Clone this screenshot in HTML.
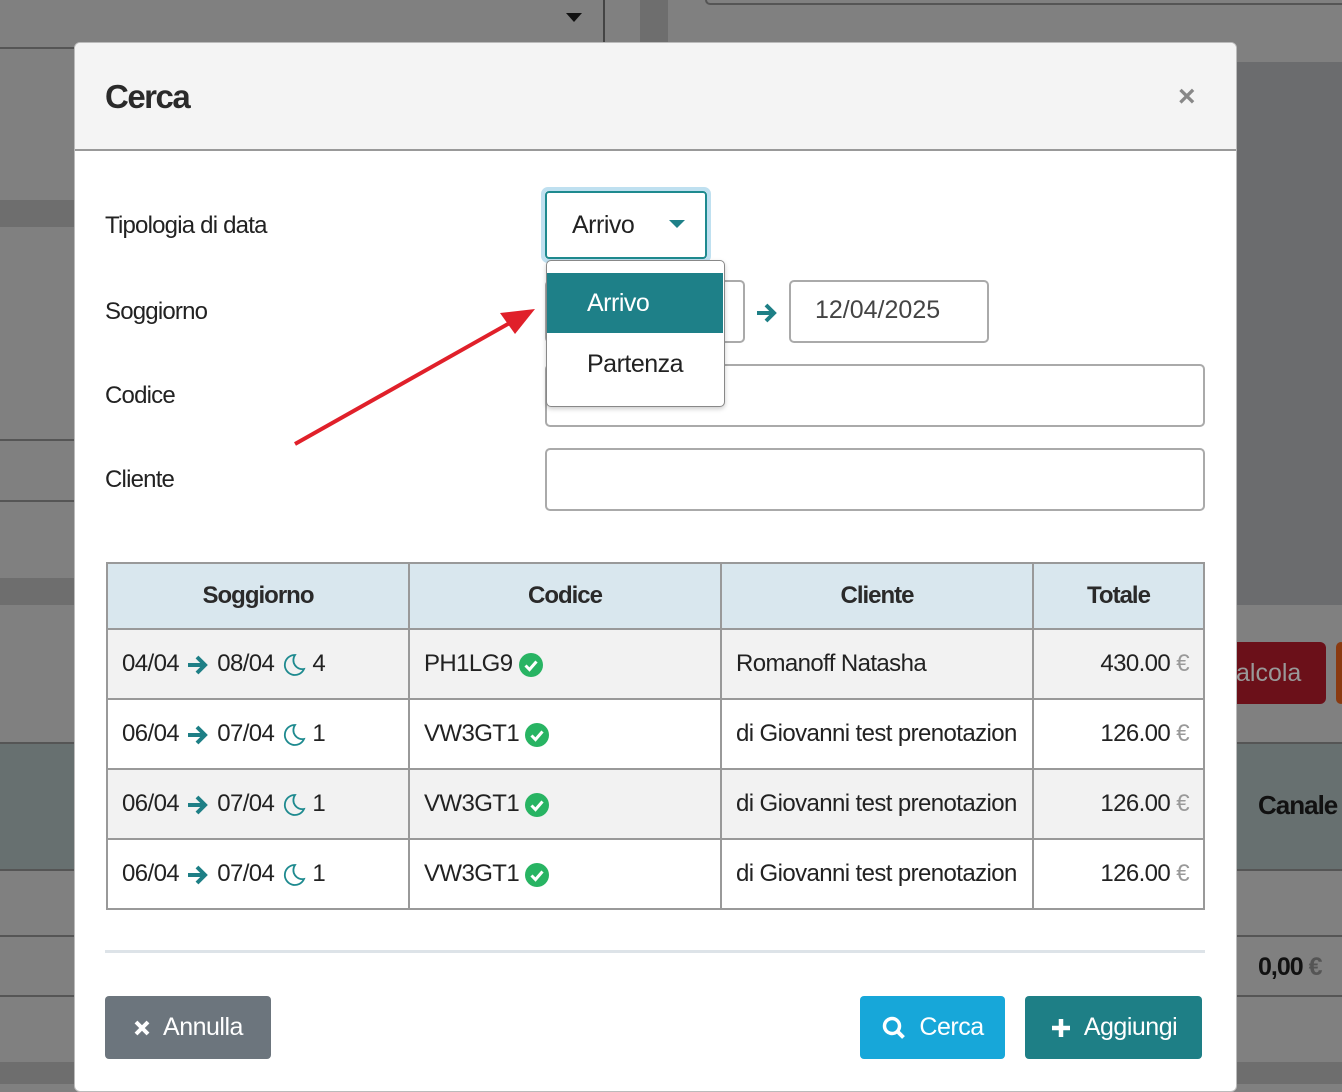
<!DOCTYPE html>
<html><head><meta charset="utf-8"><style>
*{box-sizing:border-box;margin:0;padding:0}
body{width:1342px;height:1084px;overflow:hidden;background:#808080;font-family:"Liberation Sans",sans-serif;position:relative;color:#222}
.a{position:absolute}
.lbl{font-size:24px;letter-spacing:-0.8px;color:#222}
.inp{position:absolute;background:#fff;border:2px solid #aaa;border-radius:5px}
table{border-collapse:collapse;position:absolute;left:106px;top:562px;width:1099px;font-size:24px;letter-spacing:-0.6px}
td,th{border:2px solid #999;height:70px;padding:0 14px;white-space:nowrap;overflow:hidden}
th{background:#d9e7ee;height:66px;font-weight:bold;font-size:24px;letter-spacing:-1px;color:#2a2a2a}
tr.o td{background:#f2f2f2}
td{background:#fff;color:#222}
.eu{color:#999}
.btn{position:absolute;height:63px;border-radius:4px;color:#fff;font-size:25px;letter-spacing:-0.5px;display:flex;align-items:center;justify-content:center;gap:12px}
svg{vertical-align:middle}
</style></head><body>
<!-- background -->
<div class="a" style="left:0;top:47px;width:80px;height:2px;background:#555"></div>
<div class="a" style="left:0;top:200px;width:80px;height:27px;background:#6e6e6e"></div>
<div class="a" style="left:0;top:439px;width:80px;height:2px;background:#555"></div>
<div class="a" style="left:0;top:500px;width:80px;height:2px;background:#555"></div>
<div class="a" style="left:0;top:578px;width:80px;height:27px;background:#6e6e6e"></div>
<div class="a" style="left:0;top:743px;width:1342px;height:127px;background:#677070"></div>
<div class="a" style="left:0;top:742px;width:1342px;height:2px;background:#555"></div>
<div class="a" style="left:0;top:869px;width:1342px;height:2px;background:#555"></div>
<div class="a" style="left:0;top:935px;width:1342px;height:2px;background:#555"></div>
<div class="a" style="left:0;top:995px;width:1342px;height:2px;background:#555"></div>
<div class="a" style="left:0;top:1062px;width:1342px;height:22px;background:#6e6e6e"></div>
<div class="a" style="left:603px;top:0;width:2px;height:44px;background:#444"></div>
<div class="a" style="left:640px;top:0;width:28px;height:44px;background:#6e6e6e"></div>
<div class="a" style="left:705px;top:0;width:640px;height:5px;border-left:2px solid #555;border-bottom:2px solid #555;border-radius:0 0 0 5px"></div>
<div class="a" style="left:566px;top:13px;width:0;height:0;border-left:8px solid transparent;border-right:8px solid transparent;border-top:9px solid #111"></div>
<div class="a" style="left:1236px;top:62px;width:106px;height:543px;background:#6b6c6e"></div>
<div class="a" style="left:1236px;top:642px;width:90px;height:62px;background:#6b1019;border-radius:0 6px 6px 0;color:#999;font-size:25px;line-height:62px">alcola</div>
<div class="a" style="left:1336px;top:642px;width:10px;height:62px;background:#8a3a10;border-radius:6px"></div>
<div class="a" style="left:1258px;top:790px;font-size:26px;font-weight:bold;color:#111;letter-spacing:-1px">Canale</div>
<div class="a" style="left:1258px;top:953px;font-size:25px;font-weight:bold;color:#111;letter-spacing:-1px">0,00 <span style="color:#555">€</span></div>

<!-- modal -->
<div class="a" style="left:74px;top:42px;width:1163px;height:1050px;background:#fff;border:1px solid #bbb;border-radius:6px;overflow:hidden">
 <div style="height:108px;background:#f4f4f4;border-bottom:2px solid #999"></div>
</div>
<div class="a" style="left:105px;top:78px;font-size:33px;font-weight:bold;letter-spacing:-1.5px;color:#2a2a2a">Cerca</div>
<div class="a" style="left:1178px;top:80px;font-size:30px;font-weight:bold;color:#888">×</div>

<div class="a lbl" style="left:105px;top:212px">Tipologia di data</div>
<div class="a lbl" style="left:105px;top:298px">Soggiorno</div>
<div class="a lbl" style="left:105px;top:382px">Codice</div>
<div class="a lbl" style="left:105px;top:466px">Cliente</div>

<div class="inp" style="left:545px;top:280px;width:200px;height:63px"></div>
<svg class="a" style="left:754px;top:300px" width="26" height="26" viewBox="0 0 26 26"><path d="M3 13h17M12 5l8 8-8 8" fill="none" stroke="#1e7f86" stroke-width="4"/></svg>
<div class="inp" style="left:789px;top:280px;width:200px;height:63px;font-size:25px;color:#444;padding:14px 0 0 24px">12/04/2025</div>
<div class="inp" style="left:545px;top:364px;width:660px;height:63px"></div>
<div class="inp" style="left:545px;top:448px;width:660px;height:63px"></div>

<div class="a" style="left:541px;top:187px;width:170px;height:76px;border:4px solid #bfe0f0;border-radius:7px"></div>
<div class="a" style="left:545px;top:191px;width:162px;height:68px;border:2px solid #1e8a8f;border-radius:4px;background:#fff;font-size:25px;padding:18px 0 0 25px;letter-spacing:-0.5px">Arrivo</div>
<div class="a" style="left:669px;top:220px;border-left:8px solid transparent;border-right:8px solid transparent;border-top:8px solid #1e8088"></div>

<div class="a" style="left:546px;top:260px;width:179px;height:147px;background:#fff;border:1px solid #888;border-radius:5px;box-shadow:0 2px 5px rgba(0,0,0,.2)"></div>
<div class="a" style="left:547px;top:273px;width:176px;height:60px;background:#1e8088;color:#fff;font-size:25px;padding:16px 0 0 40px;letter-spacing:-0.5px">Arrivo</div>
<div class="a" style="left:587px;top:350px;font-size:25px;letter-spacing:-0.5px">Partenza</div>

<svg class="a" style="left:0;top:0" width="1342" height="1084"><line x1="295" y1="444" x2="515" y2="320" stroke="#e0202a" stroke-width="4"/><path d="M535 309 L500 313 L515 334 Z" fill="#e0202a"/></svg>

<table>
<tr><th style="width:302px">Soggiorno</th><th style="width:312px">Codice</th><th style="width:312px">Cliente</th><th>Totale</th></tr>
<tr class="o"><td>04/04 <svg width="26" height="24" viewBox="0 0 26 24"><path d="M3 12h17M12 4l8 8-8 8" fill="none" stroke="#1e7f86" stroke-width="4"/></svg> 08/04 <svg width="26" height="26" viewBox="0 0 26 26"><path d="M15 3a10 10 0 1 0 9 14a9 9 0 0 1-9-14z" fill="none" stroke="#1e8a8f" stroke-width="1.8"/></svg> 4</td><td>PH1LG9 <svg width="24" height="24" viewBox="0 0 24 24"><circle cx="12" cy="12" r="12" fill="#28b463"/><path d="M6.5 12.5l4 4 7-8" fill="none" stroke="#fff" stroke-width="3"/></svg></td><td>Romanoff Natasha</td><td style="text-align:right">430.00 <span class="eu">€</span></td></tr>
<tr><td>06/04 <svg width="26" height="24" viewBox="0 0 26 24"><path d="M3 12h17M12 4l8 8-8 8" fill="none" stroke="#1e7f86" stroke-width="4"/></svg> 07/04 <svg width="26" height="26" viewBox="0 0 26 26"><path d="M15 3a10 10 0 1 0 9 14a9 9 0 0 1-9-14z" fill="none" stroke="#1e8a8f" stroke-width="1.8"/></svg> 1</td><td>VW3GT1 <svg width="24" height="24" viewBox="0 0 24 24"><circle cx="12" cy="12" r="12" fill="#28b463"/><path d="M6.5 12.5l4 4 7-8" fill="none" stroke="#fff" stroke-width="3"/></svg></td><td style="max-width:312px">di Giovanni test prenotazion</td><td style="text-align:right">126.00 <span class="eu">€</span></td></tr>
<tr class="o"><td>06/04 <svg width="26" height="24" viewBox="0 0 26 24"><path d="M3 12h17M12 4l8 8-8 8" fill="none" stroke="#1e7f86" stroke-width="4"/></svg> 07/04 <svg width="26" height="26" viewBox="0 0 26 26"><path d="M15 3a10 10 0 1 0 9 14a9 9 0 0 1-9-14z" fill="none" stroke="#1e8a8f" stroke-width="1.8"/></svg> 1</td><td>VW3GT1 <svg width="24" height="24" viewBox="0 0 24 24"><circle cx="12" cy="12" r="12" fill="#28b463"/><path d="M6.5 12.5l4 4 7-8" fill="none" stroke="#fff" stroke-width="3"/></svg></td><td style="max-width:312px">di Giovanni test prenotazion</td><td style="text-align:right">126.00 <span class="eu">€</span></td></tr>
<tr><td>06/04 <svg width="26" height="24" viewBox="0 0 26 24"><path d="M3 12h17M12 4l8 8-8 8" fill="none" stroke="#1e7f86" stroke-width="4"/></svg> 07/04 <svg width="26" height="26" viewBox="0 0 26 26"><path d="M15 3a10 10 0 1 0 9 14a9 9 0 0 1-9-14z" fill="none" stroke="#1e8a8f" stroke-width="1.8"/></svg> 1</td><td>VW3GT1 <svg width="24" height="24" viewBox="0 0 24 24"><circle cx="12" cy="12" r="12" fill="#28b463"/><path d="M6.5 12.5l4 4 7-8" fill="none" stroke="#fff" stroke-width="3"/></svg></td><td style="max-width:312px">di Giovanni test prenotazion</td><td style="text-align:right">126.00 <span class="eu">€</span></td></tr>
</table>

<div class="a" style="left:105px;top:950px;width:1100px;height:3px;background:#dde3e8"></div>

<div class="btn" style="left:105px;top:996px;width:166px;background:#6c757d"><svg width="18" height="18" viewBox="0 0 18 18"><path d="M3 3l12 12M15 3L3 15" stroke="#fff" stroke-width="4"/></svg>Annulla</div>
<div class="btn" style="left:860px;top:996px;width:145px;background:#17a7d9"><svg width="26" height="26" viewBox="0 0 26 26"><circle cx="11" cy="11" r="7.5" fill="none" stroke="#fff" stroke-width="3.5"/><path d="M16.5 16.5l6 6" stroke="#fff" stroke-width="4"/></svg>Cerca</div>
<div class="btn" style="left:1025px;top:996px;width:177px;background:#1e7f86"><svg width="22" height="22" viewBox="0 0 22 22"><path d="M11 2v18M2 11h18" stroke="#fff" stroke-width="4.5"/></svg>Aggiungi</div>
</body></html>
